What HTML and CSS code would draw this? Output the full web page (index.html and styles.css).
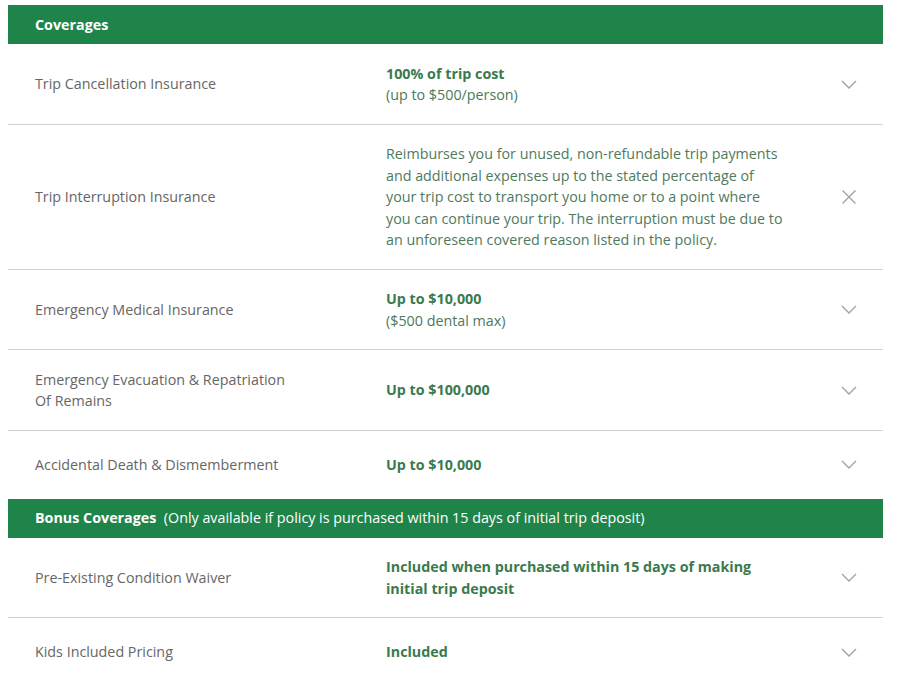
FILE: index.html
```html
<!DOCTYPE html>
<html lang="en">
<head>
<meta charset="utf-8">
<title>Coverages</title>
<link rel="stylesheet" href="styles.css">
</head>
<body>
<div class="table">
  <div class="section-head"><strong>Coverages</strong></div>

  <div class="row">
    <div class="label">Trip Cancellation Insurance</div>
    <div class="value"><strong>100% of trip cost</strong><br>(up to $500/person)</div>
    <div class="toggle"><svg class="chev" viewBox="0 0 16 9" width="16" height="9"><path d="M1 1l7 7 7-7"/></svg></div>
  </div>

  <div class="row">
    <div class="label">Trip Interruption Insurance</div>
    <div class="value desc">Reimburses you for unused, non-refundable trip payments and additional expenses up to the stated percentage of your trip cost to transport you home or to a point where you can continue your trip. The interruption must be due to an unforeseen covered reason listed in the policy.</div>
    <div class="toggle"><svg class="close" viewBox="0 0 16 16" width="16" height="16"><path d="M1.5 1.5l13 13M14.5 1.5l-13 13"/></svg></div>
  </div>

  <div class="row">
    <div class="label">Emergency Medical Insurance</div>
    <div class="value"><strong>Up to $10,000</strong><br>($500 dental max)</div>
    <div class="toggle"><svg class="chev" viewBox="0 0 16 9" width="16" height="9"><path d="M1 1l7 7 7-7"/></svg></div>
  </div>

  <div class="row">
    <div class="label">Emergency Evacuation &amp; Repatriation<br>Of Remains</div>
    <div class="value"><strong>Up to $100,000</strong></div>
    <div class="toggle"><svg class="chev" viewBox="0 0 16 9" width="16" height="9"><path d="M1 1l7 7 7-7"/></svg></div>
  </div>

  <div class="row last">
    <div class="label">Accidental Death &amp; Dismemberment</div>
    <div class="value"><strong>Up to $10,000</strong></div>
    <div class="toggle"><svg class="chev" viewBox="0 0 16 9" width="16" height="9"><path d="M1 1l7 7 7-7"/></svg></div>
  </div>

  <div class="section-head"><strong>Bonus Coverages</strong>&nbsp; (Only available if policy is purchased within 15 days of initial trip deposit)</div>

  <div class="row">
    <div class="label">Pre-Existing Condition Waiver</div>
    <div class="value"><strong>Included when purchased within 15 days of making initial trip deposit</strong></div>
    <div class="toggle"><svg class="chev" viewBox="0 0 16 9" width="16" height="9"><path d="M1 1l7 7 7-7"/></svg></div>
  </div>

  <div class="row">
    <div class="label">Kids Included Pricing</div>
    <div class="value"><strong>Included</strong></div>
    <div class="toggle"><svg class="chev" viewBox="0 0 16 9" width="16" height="9"><path d="M1 1l7 7 7-7"/></svg></div>
  </div>
</div>
</body>
</html>
```

FILE: styles.css
```css
html, body {
  margin: 0;
  padding: 0;
  background: #fff;
}

body {
  padding: 5px 30px 0 8px;
  font-family: "Open Sans", "Liberation Sans", sans-serif;
  font-size: 14.3px;
  line-height: 21.5px;
  color: #666;
}

.table {
  width: 875px;
}

.section-head {
  background: #1f844a;
  color: #fff;
  height: 39px;
  display: flex;
  align-items: center;
  padding: 0 27px;
}

.section-head strong {
  font-weight: 700;
}

.row {
  display: grid;
  grid-template-columns: 351px 401px 1fr;
  align-items: center;
  min-height: 31px;
  padding: 18.5px 27px 18px;
  border-bottom: 1px solid #d2d2d2;
}

.row.last {
  border-bottom: none;
  padding-bottom: 18.5px;
}

.label {
  color: #666;
}

.value {
  color: #4b7a5a;
}

.value strong {
  color: #3a7a4e;
  font-weight: 700;
}

.desc {
  color: #4f7a5d;
}

.toggle {
  display: flex;
  justify-content: flex-end;
}

.toggle svg {
  fill: none;
  stroke: #a3a3a3;
  stroke-width: 1.4;
  margin-right: -1px;
}
```
